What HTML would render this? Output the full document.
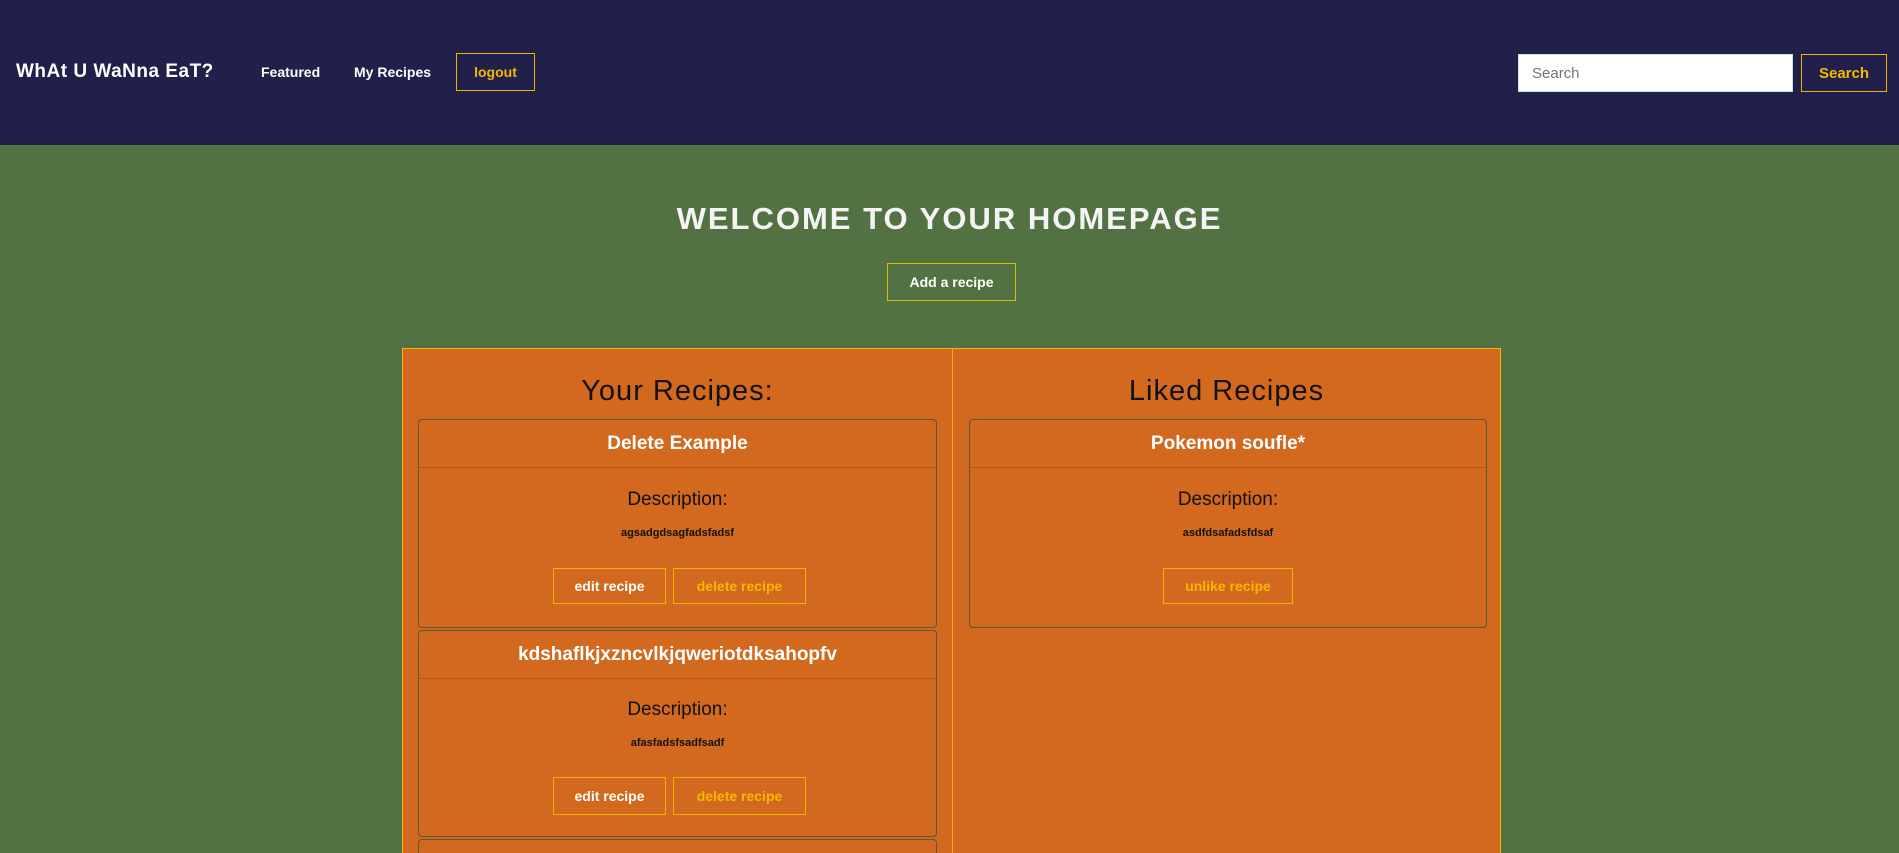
<!DOCTYPE html>
<html style="height:853px;overflow:hidden"><head><meta charset="utf-8"><style>
*{box-sizing:border-box;margin:0;padding:0}
body{width:1899px;height:853px;overflow:hidden;background:#537243;font-family:"Liberation Sans",sans-serif;position:relative}
.nav{position:absolute;left:0;top:0;width:1899px;height:145px;background:#21204a}
.a{position:absolute;white-space:nowrap}
.btn{position:absolute;border:1px solid #f0b400;display:flex;align-items:center;justify-content:center;font-weight:bold;font-size:14px}
.panel{position:absolute;left:402px;top:348px;width:1099px;height:505px;background:#d2691e;border:1px solid #f5b800;border-bottom:none;overflow:hidden}
.card{position:absolute;border:1px solid #5a5a3a;border-radius:4px;background:#d2691e}
.hd{position:absolute;left:0;right:0;top:0;height:48px;border-bottom:1px solid #b05a20;color:#fff;font-size:19px;font-weight:bold;display:flex;align-items:center;justify-content:center}
.ds{position:absolute;left:0;right:0;text-align:center;color:#111}
</style></head><body>
<div class="nav">
<div class="a" style="left:16px;top:61px;color:#fff;font-size:19px;font-weight:bold;letter-spacing:0.5px">WhAt U WaNna EaT?</div>
<div class="a" style="left:261px;top:64px;color:#fff;font-size:14px;font-weight:bold">Featured</div>
<div class="a" style="left:354px;top:64px;color:#fff;font-size:14px;font-weight:bold">My Recipes</div>
<div class="btn" style="left:456px;top:53px;width:79px;height:38px;color:#f5b800">logout</div>
<div class="a" style="left:1518px;top:54px;width:275px;height:38px;background:#fff;border:1px solid #cdd;color:#6c757d;font-size:15px;padding:10px 13px">Search</div>
<div class="btn" style="left:1801px;top:54px;width:86px;height:38px;color:#f5b800;font-size:15px">Search</div>
</div>
<div class="a" style="left:0;width:1899px;top:201px;text-align:center;color:#f4f4f4;font-size:31px;font-weight:bold;letter-spacing:2px">WELCOME TO YOUR HOMEPAGE</div>
<div class="btn" style="left:887px;top:263px;width:129px;height:38px;color:#fff;border-color:#d8c000">Add a recipe</div>
<div class="panel">
<div style="position:absolute;left:549px;top:0;width:1px;height:505px;background:#f5b800"></div>
<div class="ds" style="left:0;width:549px;top:26px;font-size:29px;letter-spacing:1px">Your Recipes:</div>
<div class="ds" style="left:549px;width:549px;right:auto;top:26px;font-size:29px;letter-spacing:1px">Liked Recipes</div>

<div class="card" style="left:15px;top:70px;width:519px;height:209px">
<div class="hd">Delete Example</div>
<div class="ds" style="top:69px;font-size:19px">Description:</div>
<div class="ds" style="top:107px;font-size:11px;font-weight:bold">agsadgdsagfadsfadsf</div>
<div class="btn" style="left:134px;top:148px;width:113px;height:36px;color:#fff">edit recipe</div>
<div class="btn" style="left:254px;top:148px;width:133px;height:36px;color:#f5b800">delete recipe</div>
</div>
<div class="card" style="left:15px;top:281px;width:519px;height:207px">
<div class="hd">kdshaflkjxzncvlkjqweriotdksahopfv</div>
<div class="ds" style="top:68px;font-size:19px">Description:</div>
<div class="ds" style="top:106px;font-size:11px;font-weight:bold">afasfadsfsadfsadf</div>
<div class="btn" style="left:134px;top:146px;width:113px;height:38px;color:#fff">edit recipe</div>
<div class="btn" style="left:254px;top:146px;width:133px;height:38px;color:#f5b800">delete recipe</div>
</div>
<div class="card" style="left:15px;top:490px;width:519px;height:15px;border-bottom:none;border-radius:4px 4px 0 0"></div>

<div class="card" style="left:566px;top:70px;width:518px;height:209px">
<div class="hd">Pokemon soufle*</div>
<div class="ds" style="top:69px;font-size:19px">Description:</div>
<div class="ds" style="top:107px;font-size:11px;font-weight:bold">asdfdsafadsfdsaf</div>
<div class="btn" style="left:193px;top:148px;width:130px;height:36px;color:#f5b800">unlike recipe</div>
</div>
</div>
</body></html>
